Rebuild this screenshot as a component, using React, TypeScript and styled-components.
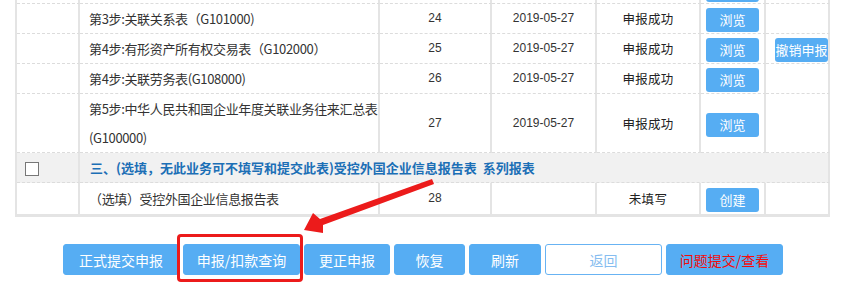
import styled, { createGlobalStyle } from 'styled-components'

const GlobalStyle = createGlobalStyle`
  html, body {
    margin: 0;
    padding: 0;
    background: #fff;
  }
  body {
    font-family: "Noto Sans CJK SC", "Liberation Sans", sans-serif;
  }
`

const Page = styled.div`
  position: relative;
  width: 846px;
  height: 306px;
  overflow: hidden;
`

const TableClip = styled.div`
  overflow: hidden;
  padding-left: 15px;
`

const Table = styled.table`
  width: 815px;
  margin-top: -26px;
  border-collapse: separate;
  border-spacing: 0;
  table-layout: fixed;
  border-left: 2px solid #e4e4e4;
  border-bottom: 3px solid #e4e4e4;
  font-size: 13px;
  color: #333;
`

const Row = styled.tr<{ $h: number; $section?: boolean }>`
  height: ${(p) => p.$h}px;
  background: ${(p) => (p.$section ? '#f1f1f1' : '#fff')};
`

const Cell = styled.td<{ $align?: 'left' | 'center' | 'right'; $mono?: boolean; $last?: boolean }>`
  box-sizing: border-box;
  padding: 0;
  text-align: ${(p) => p.$align || 'center'};
  vertical-align: middle;
  border-right: 2px solid #e4e4e4;
  border-bottom: ${(p) => (p.$last ? 'none' : '1px dashed #dcdcdc')};
  line-height: 29px;
  font-family: ${(p) => (p.$mono ? '"Liberation Sans", sans-serif' : 'inherit')};
  font-size: ${(p) => (p.$mono ? '12px' : '13px')};
  overflow: hidden;
`

const NameCell = styled(Cell)`
  padding: 0 0 0 9px;
  text-align: left;
  letter-spacing: -0.35px;
`

const CheckCell = styled(Cell)`
  padding-left: 8px;
  text-align: left;
`

const StatusText = styled.span`
  font-size: 12.5px;
  letter-spacing: 0.3px;
  color: #222;
`

const SectionTitle = styled.td`
  padding-left: 10px;
  border-right: 2px solid #e4e4e4;
  border-bottom: 1px dashed #dcdcdc;
  color: #1c6fb6;
  font-weight: bold;
  font-size: 13px;
  white-space: nowrap;
`

const CheckBox = styled.span`
  display: inline-block;
  width: 12px;
  height: 12px;
  border: 1px solid #777;
  background: #fff;
  vertical-align: middle;
`

const SmallButton = styled.button`
  width: 53px;
  height: 24px;
  padding: 0;
  border: none;
  border-radius: 3px;
  background: #56adf3;
  color: #fff;
  font-family: "Noto Sans CJK SC", sans-serif;
  font-size: 13px;
  line-height: 24px;
  vertical-align: middle;
  white-space: nowrap;
`

const ButtonBar = styled.div`
  display: flex;
  justify-content: center;
  gap: 4px;
  margin-top: 27px;
`

const ActionButton = styled.button<{ $w: number; $variant?: 'plain' | 'outline' | 'alert' }>`
  box-sizing: border-box;
  width: ${(p) => p.$w}px;
  height: 31px;
  padding: 0;
  border-radius: 3px;
  border: 1px solid ${(p) => (p.$variant === 'outline' ? '#68b3f3' : '#56adf3')};
  background: ${(p) => (p.$variant === 'outline' ? '#fff' : '#56adf3')};
  color: ${(p) => (p.$variant === 'outline' ? '#86bdf0' : p.$variant === 'alert' ? '#f40c0c' : '#fff')};
  font-family: "Noto Sans CJK SC", sans-serif;
  font-size: 14px;
  white-space: nowrap;
`

const RedBox = styled.div`
  position: absolute;
  left: 177px;
  top: 234px;
  width: 126px;
  height: 48px;
  box-sizing: border-box;
  border: 3px solid #ec1b1b;
  border-radius: 4px;
  pointer-events: none;
`

const Arrow = styled.svg`
  position: absolute;
  left: 0;
  top: 0;
  pointer-events: none;
`

const rows = [
  { name: '第3步:关联关系表（G101000)', no: '24', date: '2019-05-27', h: 30 },
  { name: '第4步:有形资产所有权交易表（G102000）', no: '25', date: '2019-05-27', h: 29, revoke: true },
  { name: '第4步:关联劳务表(G108000)', no: '26', date: '2019-05-27', h: 30 },
  { name: '第5步:中华人民共和国企业年度关联业务往来汇总表(G100000)', no: '27', date: '2019-05-27', h: 59 },
]

export default function App() {
  return (
    <Page>
      <GlobalStyle />
      <TableClip>
        <Table>
          <colgroup>
            <col style={{ width: 63 }} />
            <col style={{ width: 300 }} />
            <col style={{ width: 112 }} />
            <col style={{ width: 105 }} />
            <col style={{ width: 104 }} />
            <col style={{ width: 65 }} />
            <col style={{ width: 64 }} />
          </colgroup>
          <tbody>
            {/* previous row, scrolled almost out of view */}
            <Row $h={30}>
              <Cell />
              <NameCell />
              <Cell />
              <Cell />
              <Cell />
              <Cell><SmallButton aria-label="浏览" /></Cell>
              <Cell />
            </Row>
            {rows.map((r) => (
              <Row key={r.no} $h={r.h}>
                <Cell />
                <NameCell>{r.name}</NameCell>
                <Cell $mono>{r.no}</Cell>
                <Cell $mono>{r.date}</Cell>
                <Cell><StatusText>申报成功</StatusText></Cell>
                <Cell><SmallButton>浏览</SmallButton></Cell>
                <Cell $align="right">{r.revoke && <SmallButton>撤销申报</SmallButton>}</Cell>
              </Row>
            ))}
            <Row $h={29} $section>
              <CheckCell><CheckBox /></CheckCell>
              <SectionTitle colSpan={6}>
                三、(选填，无此业务可不填写和提交此表)受控外国企业信息报告表&nbsp;&nbsp;系列报表
              </SectionTitle>
            </Row>
            <Row $h={31}>
              <Cell $last />
              <NameCell $last>（选填）受控外国企业信息报告表</NameCell>
              <Cell $mono $last>28</Cell>
              <Cell $last />
              <Cell $last><StatusText>未填写</StatusText></Cell>
              <Cell $last><SmallButton>创建</SmallButton></Cell>
              <Cell $last />
            </Row>
          </tbody>
        </Table>
      </TableClip>

      <ButtonBar>
        <ActionButton $w={116}>正式提交申报</ActionButton>
        <ActionButton $w={117}>申报/扣款查询</ActionButton>
        <ActionButton $w={86}>更正申报</ActionButton>
        <ActionButton $w={71}>恢复</ActionButton>
        <ActionButton $w={72}>刷新</ActionButton>
        <ActionButton $w={117} $variant="outline">返回</ActionButton>
        <ActionButton $w={117} $variant="alert">问题提交/查看</ActionButton>
      </ButtonBar>

      <RedBox />
      <Arrow width="846" height="306" viewBox="0 0 846 306">
        <polygon
          points="304,230 313,213 320,219 432,179 434,184 323,225 323,233"
          fill="#ec1b1b"
        />
      </Arrow>
    </Page>
  )
}
